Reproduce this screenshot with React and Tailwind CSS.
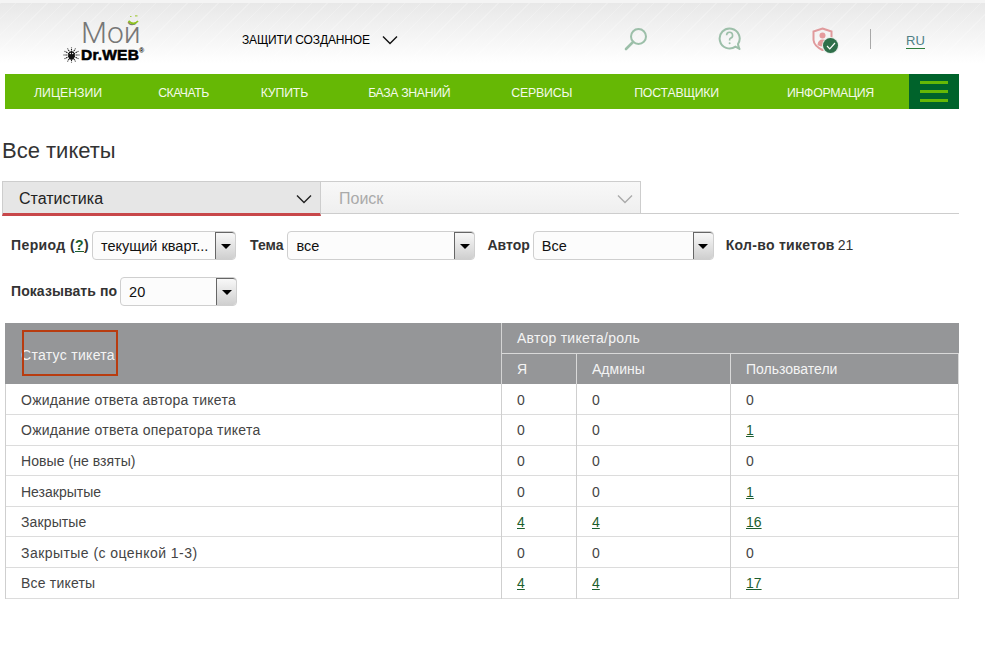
function Select({ w, text }) {
  return (
    <div className={`${w} h-[29px] flex bg-[#fcfcfc] border border-[#cfcfcf] rounded-[4px] text-[14.5px] text-[#111] overflow-hidden`}>
      <div className="flex-1 min-w-0 pl-[8px] pt-[2px] flex items-center whitespace-nowrap overflow-hidden">{text}</div>
      <div className="w-[20px] shrink-0 border-l border-t border-[#666] bg-gradient-to-b from-[#f8f8f8] to-[#cfcfcf] flex items-center justify-center rounded-tr-[3px]">
        <div className="w-0 h-0 border-x-[5px] border-x-transparent border-t-[5px] border-t-black" />
      </div>
    </div>
  );
}
function Chevron({ className, color }) {
  return (
    <svg className={className} width="16" height="10" viewBox="0 0 16 10" fill="none">
      <path d="M1 1.5 L8 8.5 L15 1.5" stroke={color} strokeWidth="1.4" />
    </svg>
  );
}
function Spider() {
  const a = [0, 30, 60, 90, 120, 150, 180, 210, 240, 270, 300, 330];
  return (
    <svg width="17" height="16" viewBox="0 0 17 16" className="shrink-0">
      {a.map((d) => (
        <line key={d} x1="8.5" y1="8" x2={8.5 + 8 * Math.cos((d * Math.PI) / 180)} y2={8 + 7.5 * Math.sin((d * Math.PI) / 180)} stroke="#222" strokeWidth="1.1" strokeDasharray="1.6 0.7" />
      ))}
      <ellipse cx="8.5" cy="8.5" rx="3.2" ry="4.2" fill="#111" />
      <circle cx="7.3" cy="6.5" r="0.7" fill="#fff" />
      <circle cx="9.7" cy="6.5" r="0.7" fill="#fff" />
    </svg>
  );
}
function Num({ v, link }) {
  return link ? <a className="underline text-[#1c5e2e]">{v}</a> : <span>{v}</span>;
}
const rows = [
  ["Ожидание ответа автора тикета", "0", "0", "0", "tracking-[0.24px]"],
  ["Ожидание ответа оператора тикета", "0", "0", "1", "tracking-[0.25px]"],
  ["Новые (не взяты)", "0", "0", "0", "tracking-[0.06px]"],
  ["Незакрытые", "0", "0", "1", "tracking-[0px]"],
  ["Закрытые", "4", "4", "16", "tracking-[0.12px]"],
  ["Закрытые (с оценкой 1-3)", "0", "0", "0", "tracking-[0.45px]"],
  ["Все тикеты", "4", "4", "17", "tracking-[0.2px]"],
];
const nav = [
  ["ЛИЦЕНЗИИ", "ml-[29px]"],
  ["СКАЧАТЬ", "ml-[56px] tracking-[-0.55px]"],
  ["КУПИТЬ", "ml-[52px] tracking-[-0.15px]"],
  ["БАЗА ЗНАНИЙ", "ml-[60px] tracking-[-0.36px]"],
  ["СЕРВИСЫ", "ml-[61px] tracking-[-0.15px]"],
  ["ПОСТАВЩИКИ", "ml-[62px] tracking-[-0.2px]"],
  ["ИНФОРМАЦИЯ", "ml-[68px] tracking-[-0.3px]"],
];
export default function App() {
  return (
    <div className="w-[985px] h-[652px] bg-white overflow-hidden font-['Liberation_Sans',Arial,sans-serif] text-[14px] text-[#444]">
      <header className="h-[74px] border-t-[3px] border-[#f4f4f4] bg-[repeating-linear-gradient(135deg,rgba(255,255,255,0.22)_0px,rgba(255,255,255,0.22)_1px,transparent_1px,transparent_11px),linear-gradient(#e8e8e8,#ffffff_85%)] flex items-start">
        <div className="ml-[63px] w-[83px] mt-[16px] flex flex-col relative">
          <div className="absolute left-[64px] -top-[4px]">
            <svg width="13" height="11" viewBox="0 0 13 11" fill="none">
              <path d="M3 1.5 h1.5 M8 0.8 h2.5" stroke="#a8cc4a" strokeWidth="1.2" />
              <path d="M1.5 6 Q6.5 11 11 6" stroke="#8fc31f" strokeWidth="1.8" />
            </svg>
          </div>
          <div className="h-[28px] pl-[18px] text-[30px] leading-[28px] text-[#777] font-['Roboto',sans-serif] font-light whitespace-nowrap">Мой</div>
          <div className="flex items-center h-[13px] mt-[1px] w-[83px]">
            <Spider />
            <span className="ml-[1px] text-[15.5px] font-bold text-black leading-none tracking-[0.2px] [-webkit-text-stroke:0.6px_black]">Dr.WEB</span>
            <span className="text-[7px] text-black -mt-[6px] font-bold">®</span>
          </div>
        </div>
        <div className="ml-[96px] mt-[30px] w-[157px] flex items-center h-[14px]">
          <span className="text-[12px] tracking-[-0.15px] text-black whitespace-nowrap">ЗАЩИТИ СОЗДАННОЕ</span>
          <Chevron className="ml-[12px]" color="#111" />
        </div>
        <svg className="ml-[225px] mt-[24px]" width="24" height="24" viewBox="0 0 24 24" fill="none">
          <circle cx="14.5" cy="9.5" r="7.5" stroke="#9cbfa9" strokeWidth="2" />
          <path d="M9 15 L2 22" stroke="#9cbfa9" strokeWidth="2.6" strokeLinecap="round" />
        </svg>
        <svg className="ml-[70px] mt-[24px]" width="24" height="24" viewBox="0 0 24 24" fill="none">
          <path d="M21.5 22 L17.5 19.6 A10 10 0 1 1 20 17 Q20.4 20 21.5 22 Z" stroke="#9cbfa9" strokeWidth="2" strokeLinejoin="round" />
          <path d="M8.6 8.3 A3 3 0 1 1 12.4 11.2 Q11.4 11.8 11.6 13.5" stroke="#9cbfa9" strokeWidth="1.6" />
          <circle cx="11.6" cy="16.2" r="1" fill="#9cbfa9" />
        </svg>
        <div className="relative ml-[70px] mt-[24px] w-[26px] h-[28px]">
          <svg width="21" height="24" viewBox="0 0 21 24" fill="none">
            <path d="M10.5 1.5 L19.5 4.5 V13 Q19 19 10.5 23 Q2 19 1.5 13 V4.5 Z" stroke="#e09a9c" strokeWidth="2" />
            <circle cx="10.5" cy="8.5" r="3" fill="#e59b9d" />
            <path d="M5.5 18 Q6 12.5 10.5 12.5 Q15 12.5 15.5 18 Q10.5 21 5.5 18 Z" fill="#e59b9d" />
          </svg>
          <div className="absolute left-[11px] top-[11px] w-[15px] h-[15px] rounded-full bg-[#2f6f4a] ring-1 ring-[#e4ece8] flex items-center justify-center">
            <svg width="10" height="8" viewBox="0 0 10 8" fill="none"><path d="M1 4 L3.8 6.8 L9 1" stroke="#fff" strokeWidth="1.2" /></svg>
          </div>
        </div>
        <div className="ml-[32px] mt-[26px] w-px h-[20px] bg-[#a8a8a8]" />
        <a className="ml-[35px] mt-[31px] text-[13px] leading-[14px] text-[#4f7f86] border-b border-[#2e7d3c]">RU</a>
      </header>

      <nav className="ml-[5px] w-[954px] h-[35px] bg-[#66b805] flex items-center text-[12.3px] text-[#f4faea] whitespace-nowrap relative">
        {nav.map(([t, m]) => (
          <span key={t} className={`${m} mt-[4px]`}>{t}</span>
        ))}
        <div className="ml-auto w-[50px] h-[35px] bg-[#00632b] flex flex-col justify-center items-center gap-[6px]">
          <div className="w-[28px] h-[3px] bg-[#66b805]" />
          <div className="w-[28px] h-[3px] bg-[#66b805]" />
          <div className="w-[28px] h-[3px] bg-[#66b805]" />
        </div>
      </nav>

      <h1 className="ml-[2px] mt-[29px] text-[22px] leading-[26px] text-[#333]">Все тикеты</h1>

      <div className="mt-[17px] ml-[2px] w-[957px] h-[35px] flex items-start">
        <div className="w-[319px] h-[35px] bg-[#e6e6e6] border-t border-l border-r border-[#cdcdcd] border-b-[3px] border-b-[#c8474a] flex items-center pl-[16px] pr-[8px] pt-[2px] text-[16px] text-[#222]">
          <span className="flex-1">Статистика</span>
          <Chevron color="#222" />
        </div>
        <div className="w-[320px] h-[33px] bg-gradient-to-b from-[#f8f8f8] to-[#efefef] border-t border-r border-b border-[#cdcdcd] flex items-center pl-[18px] pr-[7px] pt-[2px] text-[16px] text-[#aaa]">
          <span className="flex-1">Поиск</span>
          <Chevron color="#aaa" />
        </div>
        <div className="flex-1 h-[33px] border-b border-[#cdcdcd]" />
      </div>

      <div className="ml-[11px] mt-[15px] flex items-center h-[29px] whitespace-nowrap">
        <b className="text-[#333] tracking-[0.4px]">Период (<a className="underline text-[#1c5e2e]">?</a>)</b>
        <div className="ml-[3px]"><Select w="w-[144px]" text="текущий кварт..." /></div>
        <b className="ml-[14px] text-[#333]">Тема</b>
        <div className="ml-[4px]"><Select w="w-[188px]" text="все" /></div>
        <b className="ml-[12px] text-[#333]">Автор</b>
        <div className="ml-[3px]"><Select w="w-[181px]" text="Все" /></div>
        <b className="ml-[12px] text-[#333] tracking-[0.28px]">Кол-во тикетов</b>
        <span className="ml-[3px] text-[#333]">21</span>
      </div>
      <div className="ml-[11px] mt-[17px] flex items-center h-[29px] whitespace-nowrap">
        <b className="text-[#333] tracking-[0.08px]">Показывать по</b>
        <div className="ml-[3px]"><Select w="w-[117px]" text="20" /></div>
      </div>

      <table className="ml-[5px] mt-[17px] w-[954px] table-fixed border-collapse text-[14px]">
        <colgroup>
          <col className="w-[496px]" />
          <col className="w-[75px]" />
          <col className="w-[154px]" />
          <col />
        </colgroup>
        <thead className="bg-[#959698] text-[#f4f4f4] font-normal">
          <tr className="h-[30px]">
            <th rowSpan={2} className="relative font-normal text-left pl-[15px] pt-[3px] tracking-[0.3px] border-l border-l-[#959698] border-r border-[#d4d4d4]">
              Статус тикета
              <div className="absolute left-[16px] top-[7px] w-[96px] h-[46px] border-2 border-[#b83c10]" />
            </th>
            <th colSpan={3} className="font-normal text-left pl-[15px] pt-[2px] tracking-[0.25px]">Автор тикета/роль</th>
          </tr>
          <tr className="h-[31px] border-t border-[#d9d9d9]">
            <th className="font-normal text-left pl-[15px] pt-[2px] border-r border-[#d9d9d9]">Я</th>
            <th className="font-normal text-left pl-[15px] pt-[2px] border-r border-[#d9d9d9]">Админы</th>
            <th className="font-normal text-left pl-[15px] pt-[2px] border-r border-[#d9d9d9]">Пользователи</th>
          </tr>
        </thead>
        <tbody>
          {rows.map((r) => (
            <tr key={r[0]} className="h-[30.6px] border-b border-[#dcdcdc]">
              <td className={`pl-[15px] pt-[2px] border-l border-[#cfcfcf] border-r ${r[4]}`}>{r[0]}</td>
              <td className="pl-[15px] pt-[2px] border-r border-[#cfcfcf]"><Num v={r[1]} link={r[1] !== "0"} /></td>
              <td className="pl-[15px] pt-[2px] border-r border-[#cfcfcf]"><Num v={r[2]} link={r[2] !== "0"} /></td>
              <td className="pl-[15px] pt-[2px] border-r border-[#cfcfcf]"><Num v={r[3]} link={r[3] !== "0"} /></td>
            </tr>
          ))}
        </tbody>
      </table>
    </div>
  );
}
